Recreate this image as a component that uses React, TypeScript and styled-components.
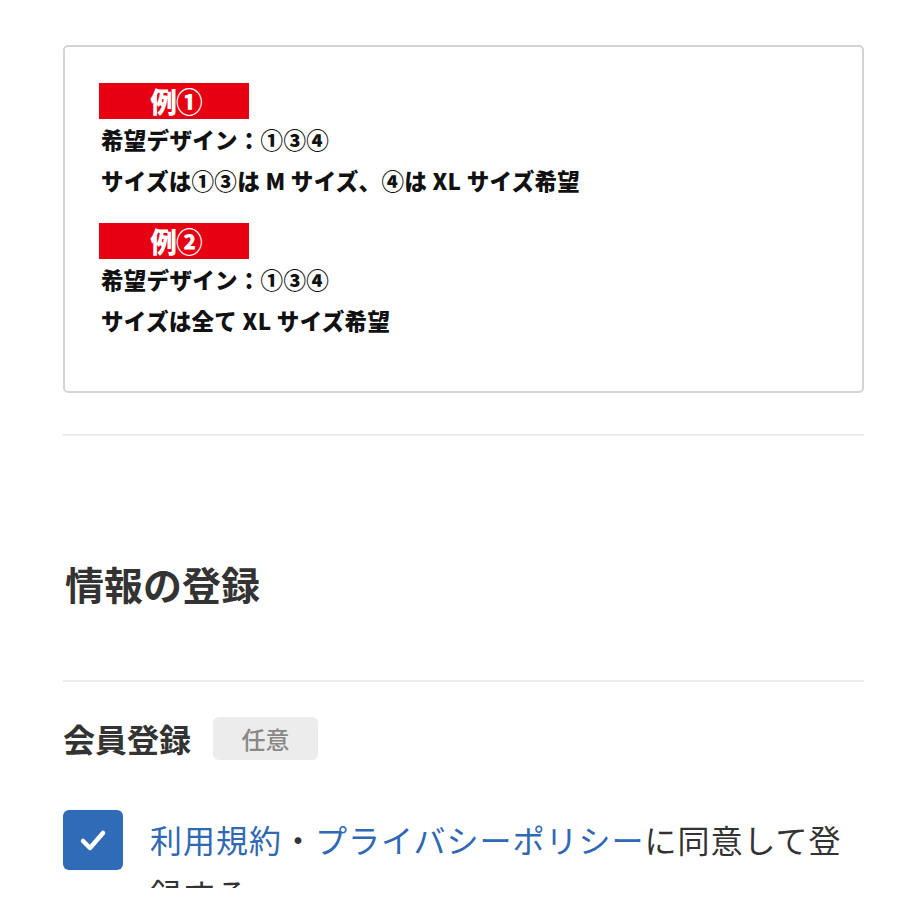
import React from 'react';
import styled, { createGlobalStyle } from 'styled-components';

const GlobalStyle = createGlobalStyle`
  html, body {
    margin: 0;
    padding: 0;
    background: #fff;
  }
  body {
    font-family: 'Noto Sans CJK JP', 'Noto Sans', sans-serif;
    color: #333;
  }
`;

const examples = [
  {
    label: '例①',
    lines: ['希望デザイン：①③④', 'サイズは①③は M サイズ、④は XL サイズ希望'],
  },
  {
    label: '例②',
    lines: ['希望デザイン：①③④', 'サイズは全て XL サイズ希望'],
  },
];

const App = () => {
  return (
    <>
      <GlobalStyle />
      <Page>
        <ExampleBox>
          {examples.map((ex, i) => (
            <Example key={i} first={i === 0}>
              <RedLabel>
                <LabelText>{ex.label}</LabelText>
              </RedLabel>
              {ex.lines.map((line) => (
                <ExampleLine key={line}>{line}</ExampleLine>
              ))}
            </Example>
          ))}
        </ExampleBox>

        <Divider />
        <SectionTitle>情報の登録</SectionTitle>
        <Divider />

        <FieldHead>
          <FieldName>会員登録</FieldName>
          <OptionalBadge>任意</OptionalBadge>
        </FieldHead>

        <AgreeRow>
          <CheckBox>
            <svg width="32" height="32" viewBox="0 0 32 32">
              <polyline
                points="6,17 13,24 26,9"
                fill="none"
                stroke="#fff"
                strokeWidth="4.5"
                strokeLinecap="round"
                strokeLinejoin="round"
              />
            </svg>
          </CheckBox>
          <AgreeText>
            <Link>利用規約</Link>・<Link>プライバシーポリシー</Link>に同意して登録する
          </AgreeText>
        </AgreeRow>
      </Page>
      <BottomCover />
    </>
  );
};

export default App;

const Page = styled.div`
  width: 801px;
  margin-left: 63px;
  padding-top: 45px;
  padding-bottom: 80px;
`;

const ExampleBox = styled.div`
  border: 2px solid #d4d4d4;
  border-radius: 5px;
  padding: 36px 34px 50px;
  margin-bottom: 41px;
`;

const Example = styled.div<{ first: boolean }>`
  margin-top: ${(p) => (p.first ? '0' : '22px')};
`;

const RedLabel = styled.div`
  width: 150px;
  height: 36px;
  background: #e60012;
  display: flex;
  align-items: center;
  justify-content: center;
`;

const LabelText = styled.span`
  color: #fff;
  font-size: 28px;
  font-weight: 900;
  line-height: 1;
  letter-spacing: -1px;
  display: inline-block;
  transform: scaleX(0.95);
  margin-left: 4px;
`;

const ExampleLine = styled.div`
  font-size: 22.5px;
  font-weight: 900;
  line-height: 41px;
  color: #111;
  padding-left: 2px;
  letter-spacing: 0.3px;
`;

const Divider = styled.div`
  height: 2px;
  background: #ececec;
`;

const SectionTitle = styled.h2`
  margin: 120px 0 70px;
  padding-left: 2px;
  font-size: 39px;
  font-weight: 700;
  line-height: 54px;
  color: #333;
`;

const FieldHead = styled.div`
  display: flex;
  align-items: center;
  gap: 22px;
  margin-top: 35px;
`;

const FieldName = styled.div`
  font-size: 32px;
  font-weight: 700;
  line-height: 43px;
  color: #333;
`;

const OptionalBadge = styled.span`
  display: inline-flex;
  align-items: center;
  justify-content: center;
  width: 105px;
  height: 43px;
  border-radius: 6px;
  background: #ececec;
  color: #888;
  font-size: 24px;
  font-weight: 500;
`;

const AgreeRow = styled.div`
  display: flex;
  align-items: flex-start;
  gap: 27px;
  margin-top: 50px;
`;

const CheckBox = styled.div`
  flex: none;
  width: 60px;
  height: 60px;
  border-radius: 6px;
  background: #2f6bb7;
  display: flex;
  align-items: center;
  justify-content: center;
`;

const AgreeText = styled.p`
  margin: 2px 0 0;
  font-size: 32px;
  line-height: 54px;
  color: #333;
  letter-spacing: 1px;
`;

const Link = styled.span`
  color: #3069b3;
`;

const BottomCover = styled.div`
  position: fixed;
  left: 0;
  right: 0;
  bottom: 0;
  height: 32px;
  background: #fff;
`;
